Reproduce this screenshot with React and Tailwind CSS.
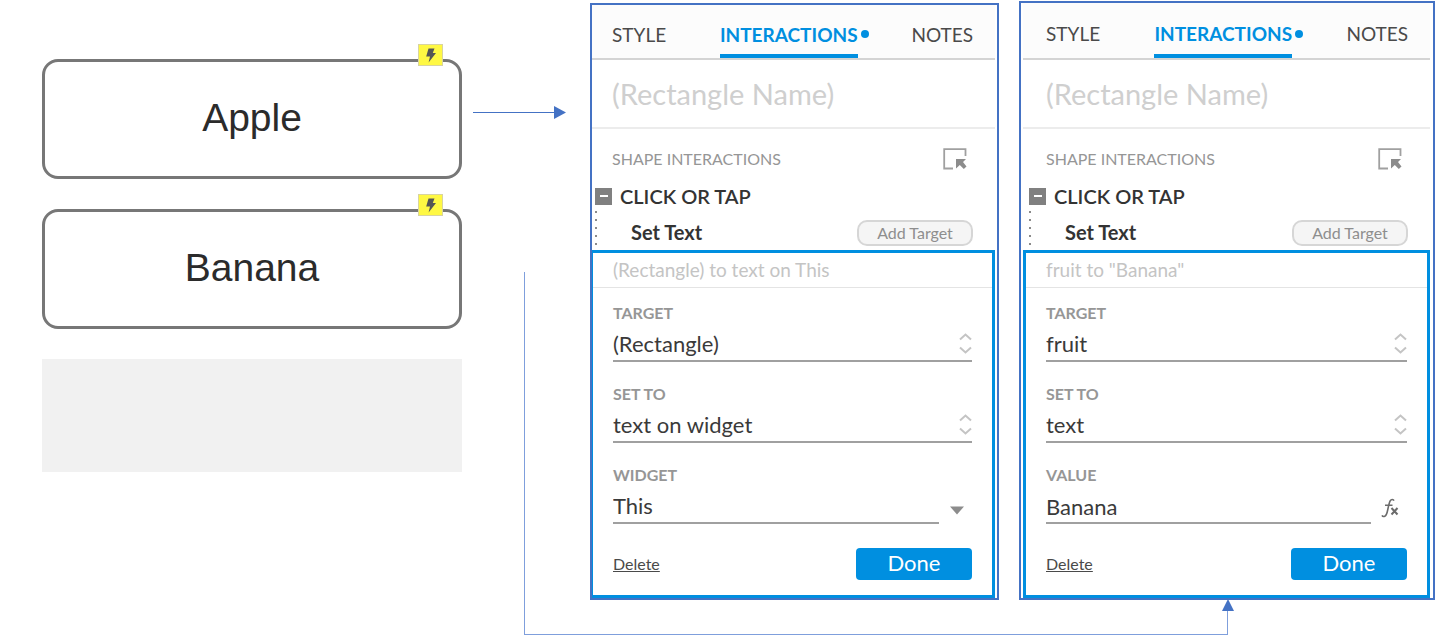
import { useId } from "react";

function BoltBadge() {
  return (
    <span className="absolute -top-[18px] right-4 flex h-[22px] w-[25px] items-center justify-center border border-[#d8d4a0] bg-[#fff843]">
      <svg width="12" height="15" viewBox="0 0 12 15" fill="#555555" aria-hidden="true">
        <path d="M3.5 0.5H9.5L7.8 5H11L3.6 14.5L5 8.6H1.2Z" />
      </svg>
    </span>
  );
}

function ShapeButton({ children }) {
  return (
    <button
      type="button"
      className="relative flex h-[120px] w-full items-center justify-center rounded-2xl border-3 border-[#777777] bg-white pb-1 font-['Liberation_Sans',sans-serif] text-[39px] leading-none text-[#2b2b2b]"
    >
      {children}
      <BoltBadge />
    </button>
  );
}

function TargetIcon() {
  return (
    <svg width="24" height="22" viewBox="0 0 24 22" aria-hidden="true">
      <path d="M10 20.5H1.2V1.2H22.5V8" fill="none" stroke="#a0a0a0" strokeWidth="1.8" />
      <path d="M13 11H23L20 14L23.5 18.4L20.8 21L16.8 17L13 20.5Z" fill="#8c8c8c" />
    </svg>
  );
}

function UpDownIcon() {
  return (
    <svg
      className="pointer-events-none absolute top-[7px] right-0"
      width="13"
      height="21"
      viewBox="0 0 13 21"
      fill="none"
      stroke="#c4c4c4"
      strokeWidth="2"
      aria-hidden="true"
    >
      <path d="M1 6.5L6.5 1.5L12 6.5M1 14.5L6.5 19.5L12 14.5" />
    </svg>
  );
}

function FxIcon() {
  return (
    <svg width="18" height="20" viewBox="0 0 18 20" fill="none" stroke="#6b6b6b" aria-hidden="true">
      <path
        d="M13 2.6C12.4 1.2 10.3 0.9 9.3 2.6C8.4 4.2 7.5 8 6.8 11.5C6.2 14.6 5.4 17.5 3.8 18.2C2.6 18.7 1.4 18.2 1 17.4M4 7.3H11.5"
        strokeWidth="1.6"
      />
      <path d="M10.5 10L16.5 16.5M16.5 10L10.5 16.5" strokeWidth="2" />
    </svg>
  );
}

const valueText =
  "h-[36px] w-full appearance-none rounded-none border-b-2 border-[#a0a0a0] bg-transparent px-0 pt-0.5 pb-0 text-[22px] leading-8 text-[#3a3a3a] outline-none";

function Field({ label, value, kind }) {
  const id = useId();
  return (
    <div>
      <label htmlFor={id} className="block text-[16px] leading-5 font-bold text-[#969696]">
        {label}
      </label>
      {kind === "select" && (
        <div className="relative mt-[3px]">
          <select id={id} className={valueText} defaultValue={value}>
            <option>{value}</option>
          </select>
          <UpDownIcon />
        </div>
      )}
      {kind === "menu" && (
        <div className="relative mt-[3px] pr-[33px]">
          <select id={id} className={valueText} defaultValue={value}>
            <option>{value}</option>
          </select>
          <svg
            className="pointer-events-none absolute top-[18px] right-2"
            width="14"
            height="9"
            viewBox="0 0 14 9"
            fill="#8c8c8c"
            aria-hidden="true"
          >
            <path d="M0 0.5H14L7 8.5Z" />
          </svg>
        </div>
      )}
      {kind === "expression" && (
        <div className="mt-[3px] flex items-center">
          <input id={id} type="text" className={valueText} defaultValue={value} />
          <button type="button" aria-label="Edit value" className="mr-2 ml-[10px] shrink-0 pt-1">
            <FxIcon />
          </button>
        </div>
      )}
    </div>
  );
}

function Panel({ summary, fields, frame, headerHeight, inset, treeInset, boxBorder }) {
  return (
    <section className={`border-2 border-[#4472c4] bg-white ${frame}`}>
      <nav
        className={`flex items-stretch justify-between border-b-2 border-[#d4d4d4] bg-[#fcfcfc] pr-[22px] text-[19px] text-[#4a4a4a] ${headerHeight} ${inset}`}
      >
        <button type="button" className="pt-[7px]">
          STYLE
        </button>
        <button type="button" className="relative pt-[7px] font-bold text-[#008fe0]">
          INTERACTIONS
          <span className="absolute inset-x-0 bottom-0 h-1 bg-[#008fe0]" />
          <span className="absolute -right-[11px] bottom-5 size-2 rounded-full bg-[#008fe0]" />
        </button>
        <button type="button" className="pt-[7px]">
          NOTES
        </button>
      </nav>
      <div className={`flex h-[69px] items-center border-b-2 border-[#ececec] ${inset}`}>
        <input
          type="text"
          aria-label="Shape name"
          placeholder="(Rectangle Name)"
          className="w-full bg-transparent text-[29px] leading-9 outline-none placeholder:text-[#cfcfcf]"
        />
      </div>

      <div className={`mt-4 flex h-7 items-center justify-between pr-7 ${inset}`}>
        <h2 className="text-[16px] text-[#969696]">SHAPE INTERACTIONS</h2>
        <button type="button" aria-label="Select target">
          <TargetIcon />
        </button>
      </div>
      <div className={`mt-[9px] flex h-7 items-center gap-2 ${treeInset}`}>
        <button
          type="button"
          aria-label="Collapse"
          className="flex size-[17px] items-center justify-center bg-[#808080]"
        >
          <span className="h-0.5 w-2 bg-white" />
        </button>
        <h3 className="text-[20px] font-semibold text-[#333333]">CLICK OR TAP</h3>
      </div>
      <div className={`flex h-10 items-center justify-between pr-[22px] ${treeInset}`}>
        <svg width="2" height="40" viewBox="0 0 2 40" fill="#8a8a8a" aria-hidden="true">
          <path d="M0 1h2v2H0zM0 9h2v2H0zM0 17h2v2H0zM0 25h2v2H0zM0 33h2v2H0z" />
        </svg>
        <h4 className="ml-[34px] flex-1 pt-1 text-[20px] font-bold text-[#333333]">Set Text</h4>
        <button
          type="button"
          className="mt-[6px] h-[26px] w-[116px] rounded-[10px] border-2 border-[#d6d6d6] bg-[#f5f5f5] text-[16px] leading-5 text-[#8e8e8e]"
        >
          Add Target
        </button>
      </div>

      <div className={`border-[#008fe0] ${boxBorder}`}>
        <p className="h-[35px] border-b border-[#e4e4e4] px-5 text-[19px] leading-[34px] text-[#c4c4c4]">
          {summary}
        </p>
        <div className="flex flex-col gap-[22px] px-5 pt-[15px]">
          {fields.map((f) => (
            <Field key={f.label} {...f} />
          ))}
        </div>
        <div className="mt-6 mb-[15px] flex items-center justify-between px-5">
          <a href="#delete" className="text-[16px] text-[#4a4a4a] underline">
            Delete
          </a>
          <button type="button" className="h-8 w-[116px] rounded bg-[#008fe0] pb-0.5 text-[22px] leading-7 text-white">
            Done
          </button>
        </div>
      </div>
    </section>
  );
}

export default function App() {
  return (
    <main className="relative grid grid-cols-[420fr_128fr_409fr_20fr_416fr] items-start bg-white pb-9 pl-[42px] pr-px font-[Lato,'Open_Sans',sans-serif]">
      <div className="flex flex-col gap-[30px] pt-[59px]">
        <ShapeButton>Apple</ShapeButton>
        <ShapeButton>Banana</ShapeButton>
        <div className="h-[113px] bg-[#f1f1f1]" />
      </div>

      <div className="px-[11px] pt-[106px] pr-6">
        <div className="flex items-center">
          <span className="h-px flex-1 bg-[#4472c4]" />
          <svg width="12" height="13" viewBox="0 0 12 13" fill="#4472c4" aria-hidden="true">
            <path d="M0 0L12 6.5L0 13Z" />
          </svg>
        </div>
      </div>

      <Panel
        summary="(Rectangle) to text on This"
        frame="mt-[3px] pr-0.5"
        headerHeight="h-[55px]"
        inset="pl-5"
        treeInset="pl-[3px]"
        boxBorder="border-y-3 border-r-3 border-l"
        fields={[
          { label: "TARGET", value: "(Rectangle)", kind: "select" },
          { label: "SET TO", value: "text on widget", kind: "select" },
          { label: "WIDGET", value: "This", kind: "menu" },
        ]}
      />
      <span />
      <Panel
        summary={'fruit to "Banana"'}
        frame="mt-px pl-0.5 pr-[3px]"
        headerHeight="h-[57px]"
        inset="pl-[23px]"
        treeInset="pl-[6px]"
        boxBorder="border-3"
        fields={[
          { label: "TARGET", value: "fruit", kind: "select" },
          { label: "SET TO", value: "text", kind: "select" },
          { label: "VALUE", value: "Banana", kind: "expression" },
        ]}
      />

      <div className="pointer-events-none absolute top-[272px] right-[14.5%] bottom-px left-[36.5%]" aria-hidden="true">
        <div className="h-full border-b border-l border-[#7f9fdc]" />
        <div className="absolute -right-[6px] bottom-0 flex h-9 flex-col items-center">
          <svg width="12" height="12" viewBox="0 0 12 12" fill="#4472c4">
            <path d="M6 0L12 12H0Z" />
          </svg>
          <span className="w-px flex-1 bg-[#7f9fdc]" />
        </div>
      </div>
    </main>
  );
}
